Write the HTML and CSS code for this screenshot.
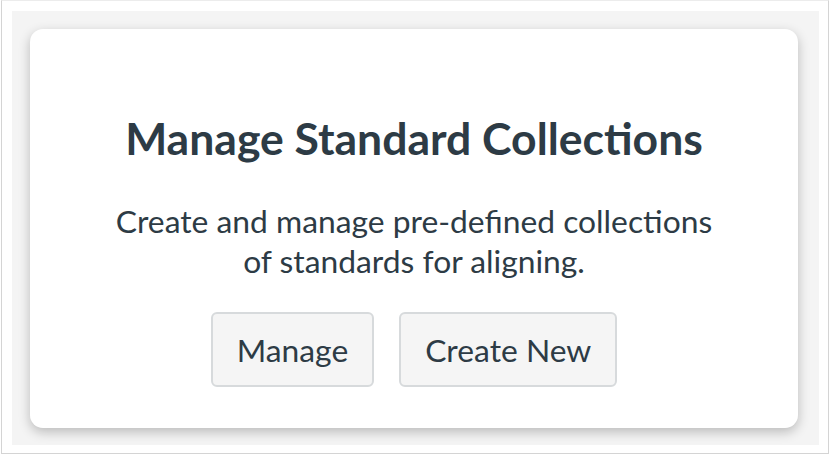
FILE: index.html
```html
<!DOCTYPE html>
<html>
<head>
<meta charset="utf-8">
<link rel="stylesheet" href="styles.css">
</head>
<body>
<div class="frame">
  <div class="stage">
    <div class="card">
      <h1 class="title">Manage Standard Collections</h1>
      <p class="desc">Create and manage pre-defined collections<br>of standards for aligning.</p>
      <div class="actions">
        <button class="btn">Manage</button>
        <button class="btn">Create New</button>
      </div>
    </div>
  </div>
</div>
</body>
</html>
```
FILE: styles.css
```css
html, body {
  margin: 0;
  padding: 0;
  background: #ffffff;
  width: 832px;
  height: 458px;
  overflow: hidden;
}
.frame {
  box-sizing: border-box;
  margin-left: 1px;
  width: 828px;
  height: 454px;
  border: 1px solid #d4d4d4;
  border-top-color: #ececec;
  padding: 10px 9px 8px 10px;
}
.stage {
  box-sizing: border-box;
  height: 100%;
  background: #f4f4f4;
  padding: 18px 21px 16px 18px;
}
.card {
  box-sizing: border-box;
  height: 399px;
  background: #ffffff;
  border-radius: 13px;
  box-shadow: 0 4px 12px rgba(0,0,0,0.24);
  display: flex;
  flex-direction: column;
  align-items: center;
  font-family: Lato, "Open Sans", sans-serif;
  color: #2d3b45;
  padding-top: 83px;
}
.title {
  margin: 0;
  font-size: 44.5px;
  font-weight: 700;
  line-height: 52px;
}
.desc {
  margin: 37px 0 0;
  font-size: 31.8px;
  line-height: 40px;
  text-align: center;
}
.actions {
  display: flex;
  gap: 25px;
  margin-top: 31px;
}
.btn {
  font-family: Lato, sans-serif;
  font-size: 31.8px;
  color: #2d3b45;
  background: #f5f5f5;
  border: 2px solid #d7dadc;
  border-radius: 6px;
  height: 75px;
  padding: 0 24px;
}
```
